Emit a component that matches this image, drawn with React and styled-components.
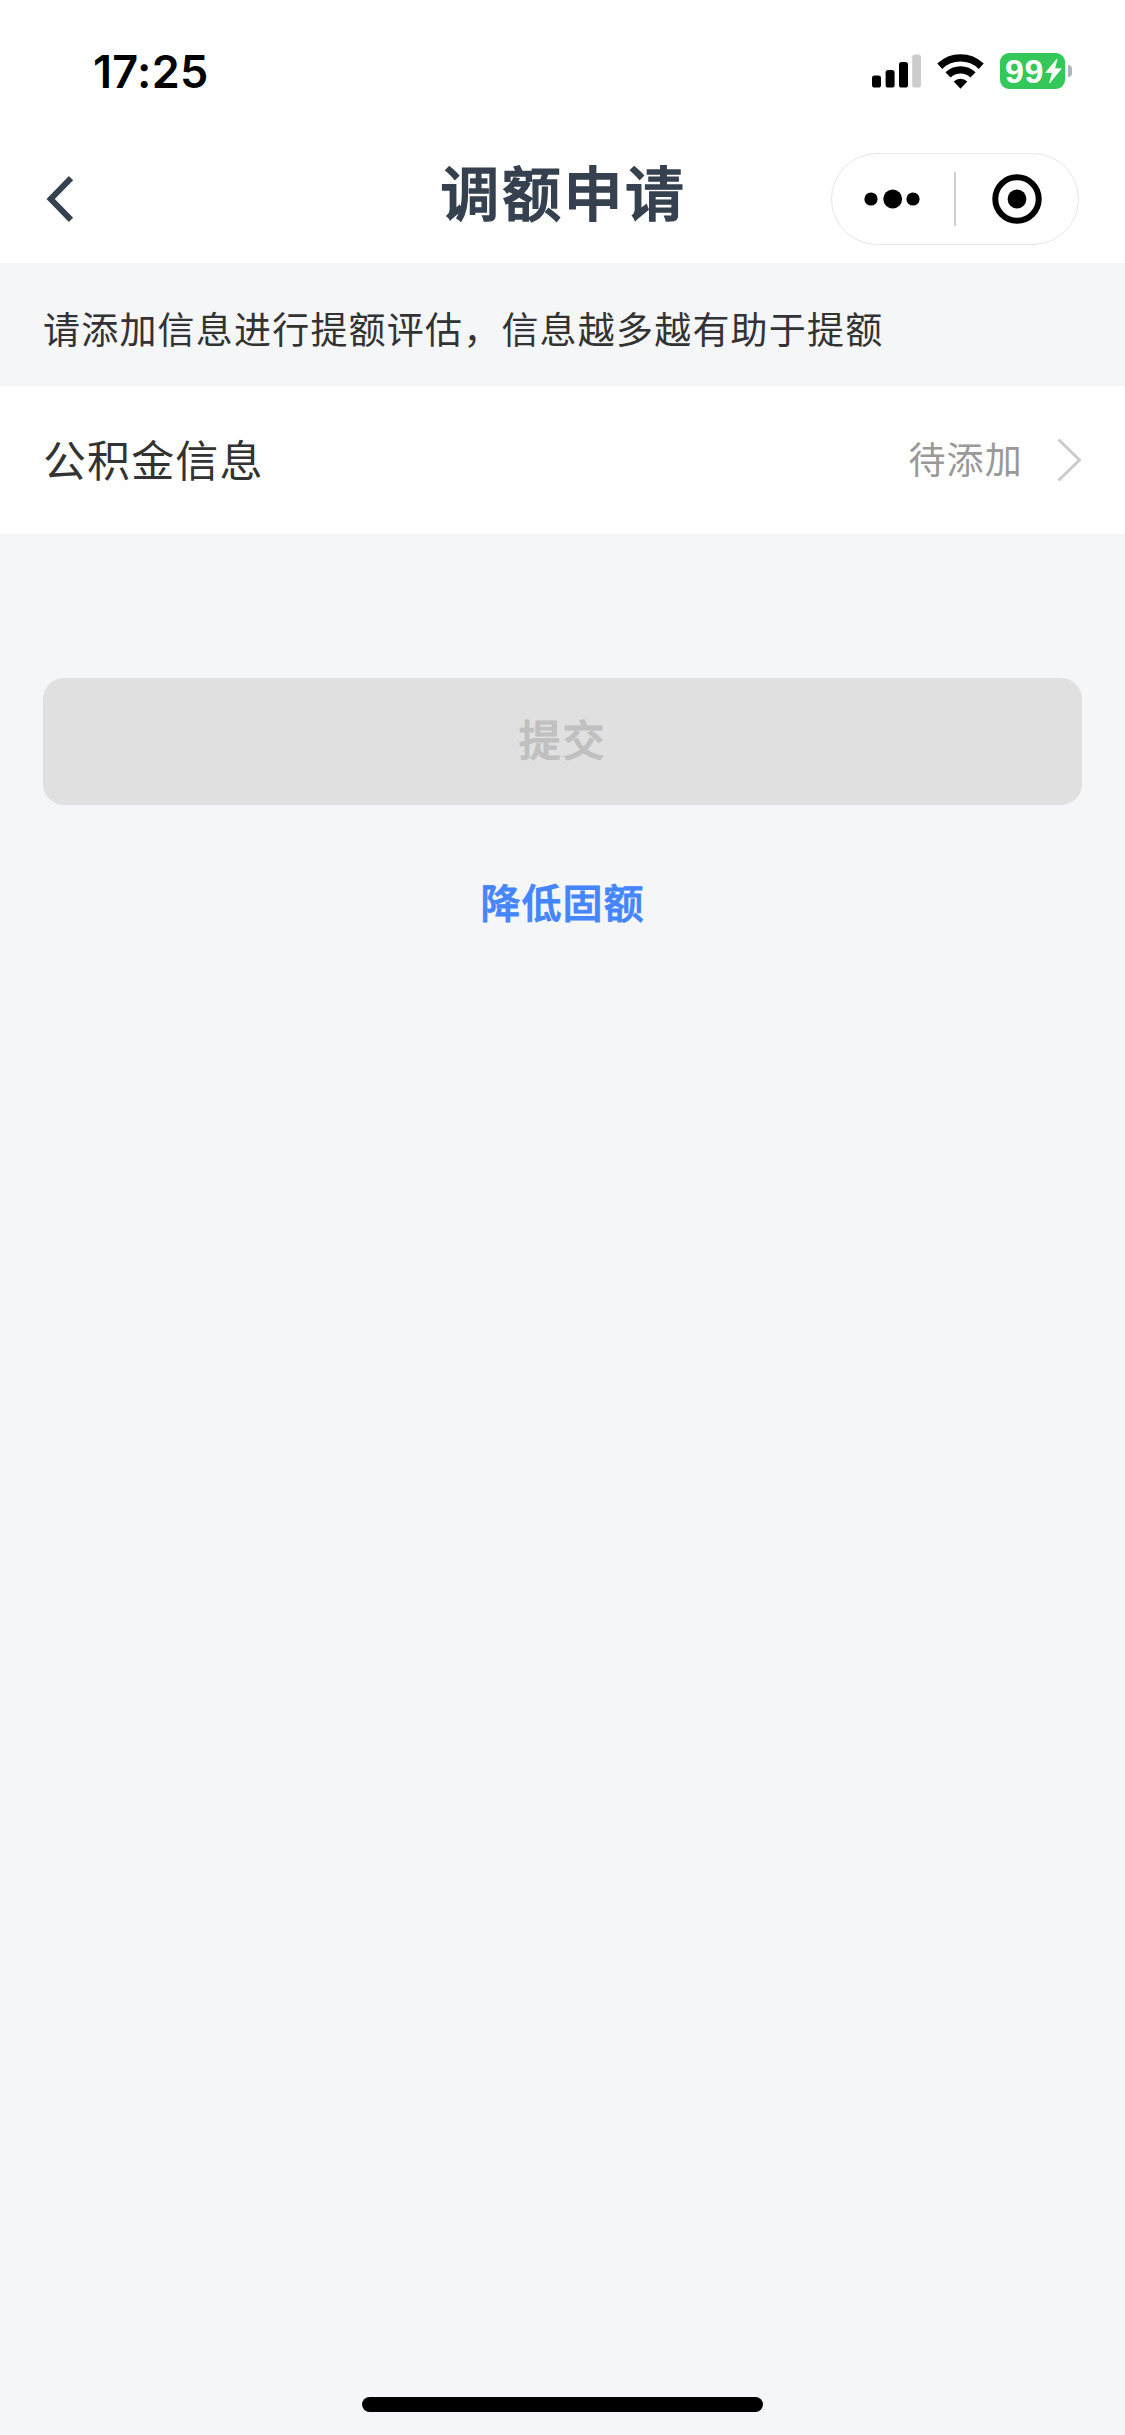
import React from 'react';
import styled, { createGlobalStyle } from 'styled-components';

const App = () => {
  return (
    <Pantalla>
      <GlobalStyle />
      <BarraEstado>
        <Hora>17:25</Hora>
        <Indicadores>
          <IconoSenal />
          <IconoWifi />
          <Bateria>
            <Nivel>
              99
              <IconoRayo />
            </Nivel>
            <Polo />
          </Bateria>
        </Indicadores>
      </BarraEstado>

      <Navegacion>
        <BotonVolver type="button" aria-label="返回">
          <svg width="28" height="48" viewBox="0 0 28 48" fill="none">
            <path d="M25 3.2 L4.7 24 L25 44.8" stroke="#364150" strokeWidth="6" />
          </svg>
        </BotonVolver>
        <Titulo>调额申请</Titulo>
        <Capsula>
          <svg width="56" height="20" viewBox="0 0 56 20">
            <circle cx="7" cy="10" r="6.6" />
            <circle cx="28.7" cy="10" r="9.4" />
            <circle cx="49" cy="10" r="6.6" />
          </svg>
          <Separador />
          <svg width="50" height="50" viewBox="0 0 50 50">
            <circle cx="25" cy="25" r="21.7" fill="none" stroke="#000" strokeWidth="6" />
            <circle cx="25" cy="25" r="9.4" />
          </svg>
        </Capsula>
      </Navegacion>

      <Aviso>请添加信息进行提额评估，信息越多越有助于提额</Aviso>

      <Fila>
        <Etiqueta>公积金信息</Etiqueta>
        <Estado>待添加</Estado>
        <svg width="26" height="44" viewBox="0 0 26 44" fill="none">
          <path d="M2.5 1.5 L23.5 22 L2.5 42.5" stroke="#cbcbcb" strokeWidth="3" />
        </svg>
      </Fila>

      <Acciones>
        <Boton type="button" disabled>提交</Boton>
        <Enlace type="button">降低固额</Enlace>
      </Acciones>

      <BarraInicio />
    </Pantalla>
  );
}

const IconoSenal = () => (
  <svg width="49" height="34" viewBox="0 0 49 34">
    <rect x="0" y="21.5" width="9" height="12" rx="2.6" />
    <rect x="13.6" y="16" width="9" height="17.5" rx="2.6" />
    <rect x="27" y="8" width="9" height="25.5" rx="2.6" />
    <rect x="40.2" y="0.5" width="8.8" height="33" rx="2.6" fill="#cccccc" />
  </svg>
);

const IconoWifi = () => (
  <svg width="47" height="35" viewBox="0 0 47 35">
    <path d="M2.8 12.2 A30 30 0 0 1 44.2 12.2" fill="none" stroke="#000" strokeWidth="7.4" />
    <path d="M11 20.9 A18 18 0 0 1 36 20.9" fill="none" stroke="#000" strokeWidth="7.4" />
    <path d="M23.5 34.8 L16.7 27.6 A9.8 9.8 0 0 1 30.3 27.6 Z" />
  </svg>
);

const IconoRayo = () => (
  <svg width="17" height="26" viewBox="0 0 17 26">
    <path d="M12 1 L0.8 14.4 H7.4 L4.6 25 L16.2 10.8 H9.6 Z" fill="#fff" stroke="#fff" strokeWidth="0.8" strokeLinejoin="round" />
  </svg>
);

const GlobalStyle = createGlobalStyle`
  * {
    box-sizing: border-box;
  }

  body {
    margin: 0;
    background: #f4f6f8;
    font-family: "Noto Sans CJK SC", sans-serif;
  }

  svg {
    display: block;
    flex-shrink: 0;
  }

  button {
    font-family: inherit;
    border: none;
    padding: 0;
    background: none;
  }
`;

const Pantalla = styled.div`
  width: 1125px;
  height: 2435px;
  display: flex;
  flex-direction: column;
  background: #f4f6f8;
`;

const BarraEstado = styled.div`
  height: 142px;
  padding: 0 53px 0 93px;
  display: flex;
  justify-content: space-between;
  align-items: center;
  background: #fff;
`;

const Hora = styled.span`
  padding-top: 2px;
  font-family: Inter, sans-serif;
  font-size: 45px;
  font-weight: 600;
  line-height: 54px;
  letter-spacing: 0.3px;
  color: #000;
`;

const Indicadores = styled.div`
  display: flex;
  align-items: center;
  gap: 16px;
`;

const Bateria = styled.div`
  display: flex;
  align-items: center;
  gap: 3px;
`;

const Nivel = styled.div`
  width: 65px;
  height: 36px;
  padding-left: 2px;
  border-radius: 9px;
  display: flex;
  align-items: center;
  justify-content: center;
  gap: 1px;
  background: #34c759;
  color: #fff;
  font-family: "Liberation Sans", Arial, sans-serif;
  font-size: 34px;
  font-weight: 700;
  line-height: 38px;
  letter-spacing: 0.6px;
`;

const Polo = styled.div`
  width: 4px;
  height: 12px;
  border-radius: 0 4px 4px 0;
  background: #b4b4b4;
`;

const Navegacion = styled.div`
  height: 121px;
  padding: 0 46px;
  display: grid;
  grid-template-columns: 1fr auto 1fr;
  align-items: center;
  background: #fff;
`;

const BotonVolver = styled.button`
  justify-self: start;
  margin-top: -7px;
`;

const Titulo = styled.h1`
  margin: -23px 0 0;
  padding-left: 2px;
  font-size: 59px;
  font-weight: 500;
  line-height: 80px;
  letter-spacing: 2.6px;
  color: #364150;
  -webkit-text-stroke: 1.4px #364150;
`;

const Capsula = styled.div`
  justify-self: end;
  width: 248px;
  height: 92px;
  margin-top: -7px;
  padding: 0 36px 0 32px;
  display: flex;
  align-items: center;
  justify-content: space-between;
  border: 1px solid #e6e6e6;
  border-radius: 46px;
`;

const Separador = styled.div`
  width: 2px;
  height: 54px;
  margin-right: 3px;
  background: #cfcfcf;
`;

const Aviso = styled.p`
  height: 123px;
  margin: 0;
  padding: 4px 43px 0;
  font-size: 37px;
  line-height: 123px;
  letter-spacing: 1.2px;
  color: #333;
`;

const Fila = styled.div`
  height: 148px;
  padding: 0 43px;
  display: flex;
  align-items: center;
  background: #fff;
`;

const Etiqueta = styled.span`
  flex: 1;
  padding-bottom: 5px;
  font-size: 43px;
  letter-spacing: 1.1px;
  color: #333;
`;

const Estado = styled.span`
  margin-right: 33px;
  padding-bottom: 5px;
  font-size: 37px;
  letter-spacing: 1.2px;
  color: #999;
`;

const Acciones = styled.div`
  flex: 1;
  padding: 144px 43px 0;
  display: flex;
  flex-direction: column;
  align-items: center;
`;

const Boton = styled.button`
  width: 100%;
  height: 127px;
  padding-bottom: 8px;
  border-radius: 21px;
  background: #e0e0e0;
  color: #c0c0c0;
  font-size: 42px;
  font-weight: 500;
  letter-spacing: 1.8px;
  -webkit-text-stroke: 1px #c0c0c0;
`;

const Enlace = styled.button`
  margin-top: 66px;
  font-size: 40px;
  font-weight: 500;
  line-height: 60px;
  letter-spacing: 1px;
  color: #4585ff;
  -webkit-text-stroke: 0.9px #4585ff;
`;

const BarraInicio = styled.div`
  align-self: center;
  width: 401px;
  height: 15px;
  margin-bottom: 23px;
  border-radius: 8px;
  background: #000;
`;

export default App;
